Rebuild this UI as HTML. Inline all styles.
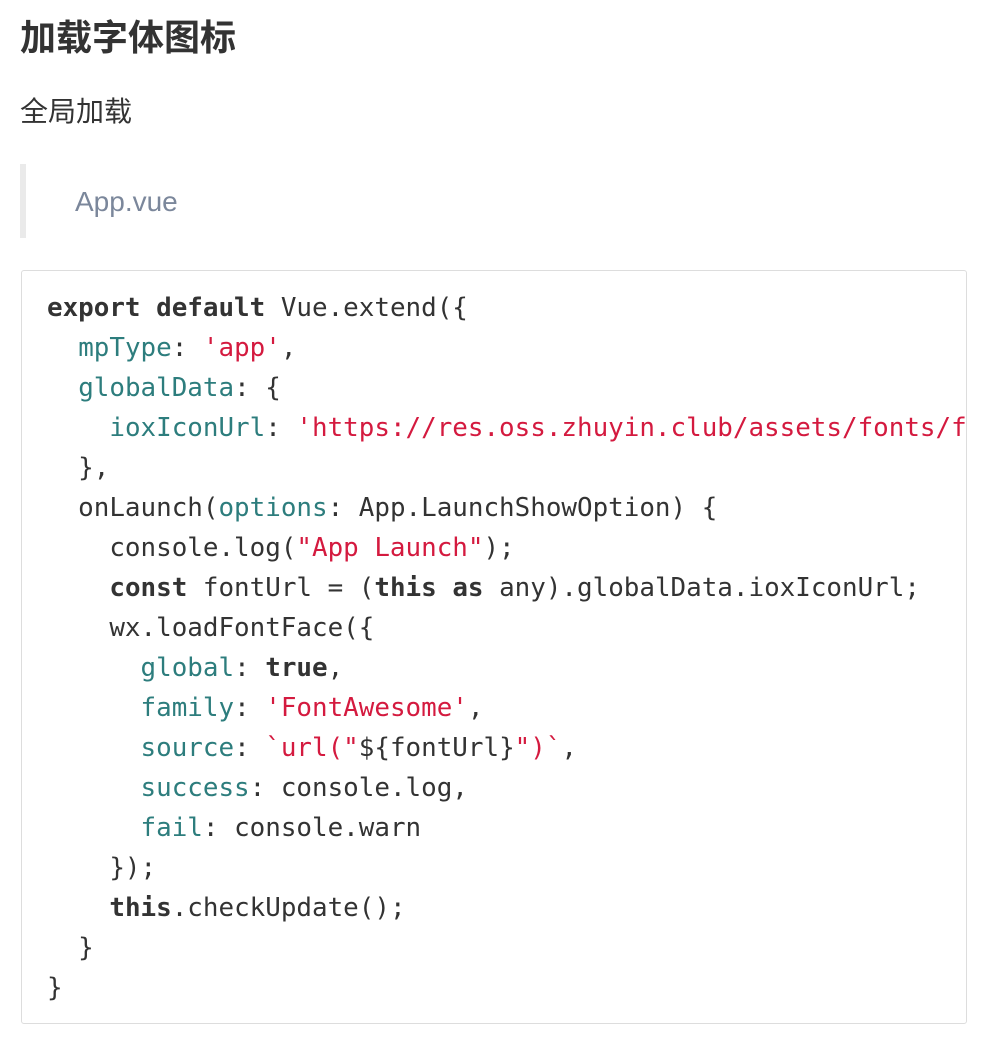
<!DOCTYPE html>
<html><head><meta charset="utf-8"><style>
body{margin:0;background:#fff;color:#333;font-family:"Liberation Sans","Noto Sans CJK SC",sans-serif;}
h2{position:absolute;left:20px;top:14px;margin:0;font-size:36px;font-weight:bold;line-height:48px;}
.p{position:absolute;left:20px;top:92px;font-size:28px;line-height:40px;margin:0;}
.bq{position:absolute;left:20px;top:164px;width:6px;height:74px;background:#eaeaea;}
.bqt{position:absolute;left:75px;top:182px;font-size:28px;line-height:40px;color:#7b879b;}
pre{position:absolute;left:21px;top:270px;width:946px;height:754px;margin:0;border:1px solid #ddd;border-radius:3px;box-sizing:border-box;padding:17px 0 0 25px;overflow:hidden;font-family:"DejaVu Sans Mono","Liberation Mono",monospace;font-size:25.9px;line-height:40px;color:#333;white-space:pre;}
b{font-weight:bold;color:#333}.t{color:#2d7d7d}.s{color:#d41a3f}
</style></head><body>
<h2>加载字体图标</h2>
<p class="p">全局加载</p>
<div class="bq"></div><div class="bqt">App.vue</div>
<pre><b>export</b> <b>default</b> Vue.extend({
  <span class="t">mpType</span>: <span class="s">'app'</span>,
  <span class="t">globalData</span>: {
    <span class="t">ioxIconUrl</span>: <span class="s">'https://res.oss.zhuyin.club/assets/fonts/fontawesome-webfont.ttf'</span>
  },
  onLaunch(<span class="t">options</span>: App.LaunchShowOption) {
    console.log(<span class="s">"App Launch"</span>);
    <b>const</b> fontUrl = (<b>this</b> <b>as</b> any).globalData.ioxIconUrl;
    wx.loadFontFace({
      <span class="t">global</span>: <b>true</b>,
      <span class="t">family</span>: <span class="s">'FontAwesome'</span>,
      <span class="t">source</span>: <span class="s">`url("</span>${fontUrl}<span class="s">")`</span>,
      <span class="t">success</span>: console.log,
      <span class="t">fail</span>: console.warn
    });
    <b>this</b>.checkUpdate();
  }
}</pre>
</body></html>
